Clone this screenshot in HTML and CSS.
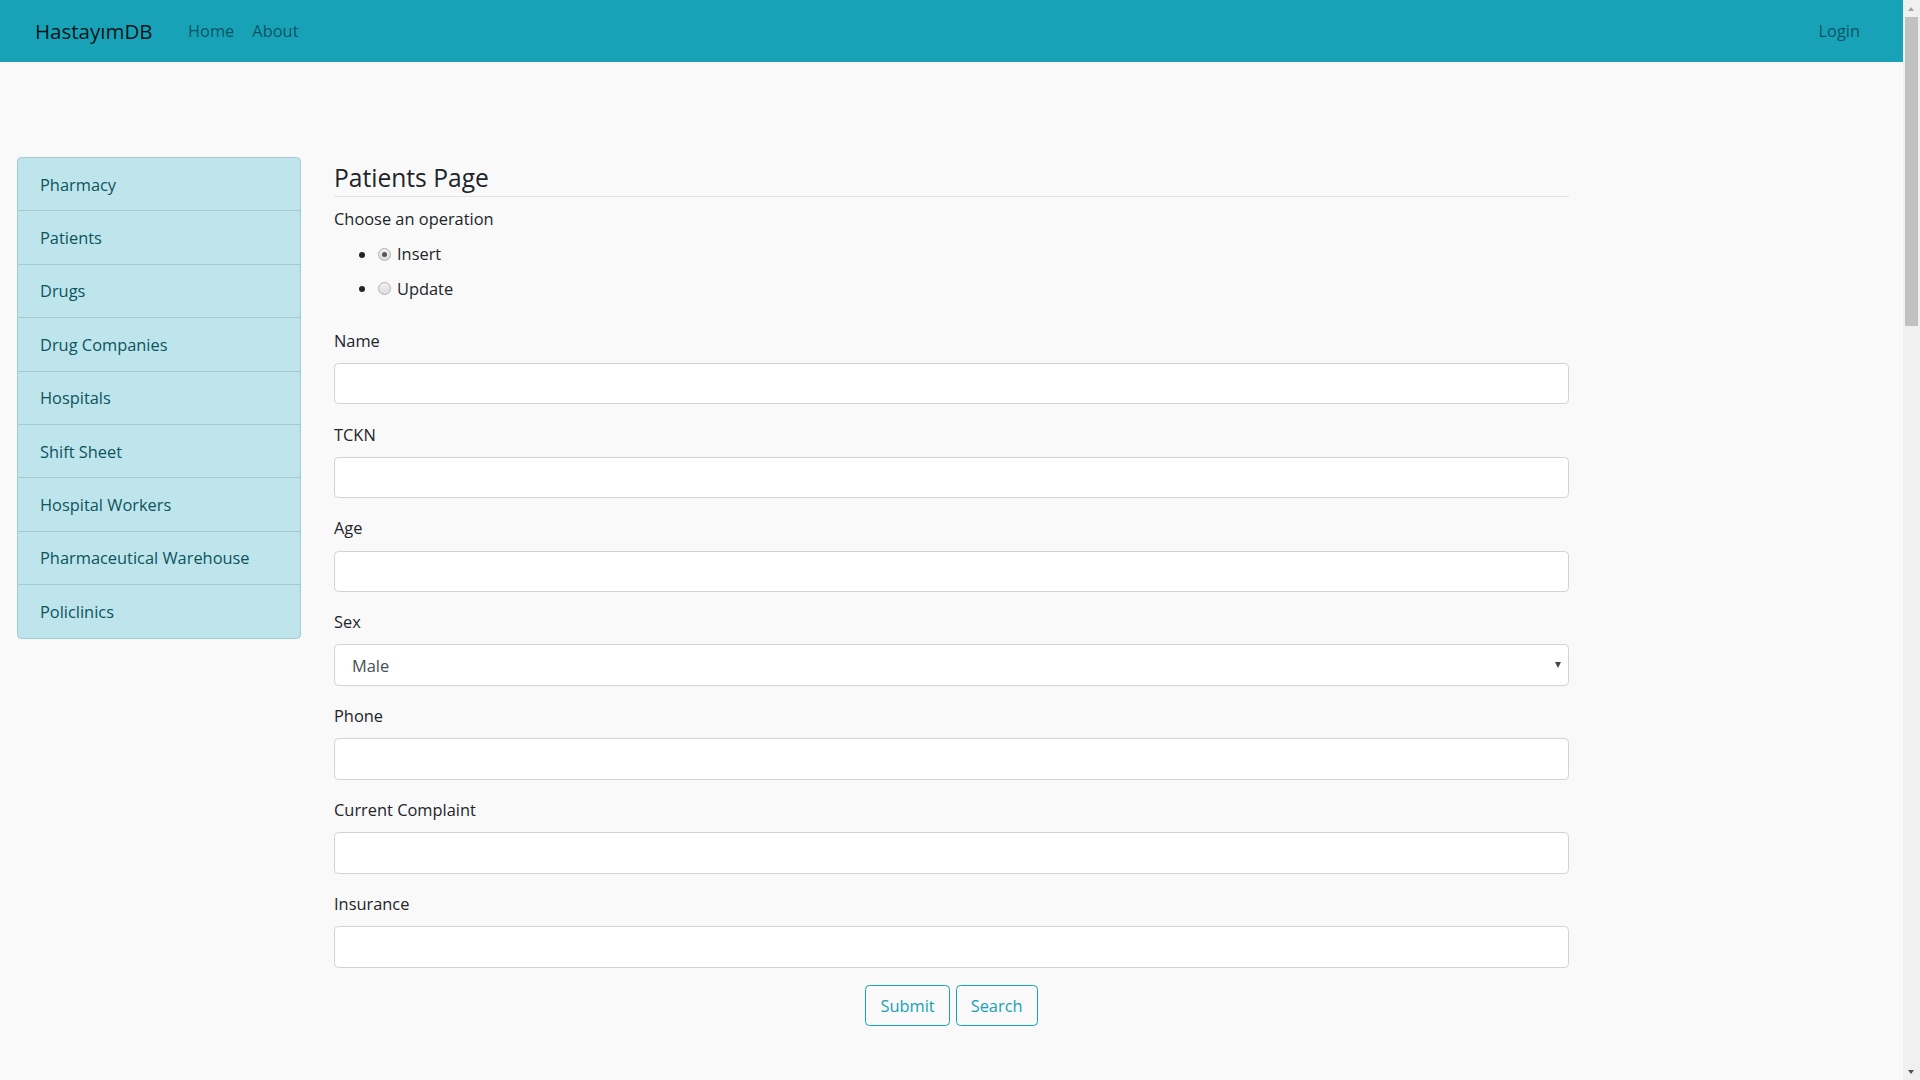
FILE: index.html
```html
<!DOCTYPE html>
<html lang="en">
<head>
<meta charset="utf-8">
<title>HastayımDB - Patients</title>
<link rel="stylesheet" href="styles.css">
</head>
<body>
<nav class="navbar">
  <a class="brand" href="#">HastayımDB</a>
  <ul class="nav">
    <li><a class="nav-link" href="#">Home</a></li>
    <li><a class="nav-link" href="#">About</a></li>
  </ul>
  <a class="nav-link login" href="#">Login</a>
</nav>

<div class="page">
  <aside class="sidebar">
    <ul class="list-group">
      <li class="list-item">Pharmacy</li>
      <li class="list-item">Patients</li>
      <li class="list-item">Drugs</li>
      <li class="list-item">Drug Companies</li>
      <li class="list-item">Hospitals</li>
      <li class="list-item">Shift Sheet</li>
      <li class="list-item">Hospital Workers</li>
      <li class="list-item">Pharmaceutical Warehouse</li>
      <li class="list-item">Policlinics</li>
    </ul>
  </aside>

  <main class="content">
    <h4 class="title">Patients Page</h4>
    <form class="form">
      <label class="label">Choose an operation</label>
      <ul class="ops">
        <li><label class="label radio-label"><input class="radio" type="radio" name="op" checked> Insert</label></li>
        <li><label class="label radio-label"><input class="radio" type="radio" name="op"> Update</label></li>
      </ul>

      <div class="group"><label class="label">Name</label><input class="control" type="text"></div>
      <div class="group"><label class="label">TCKN</label><input class="control" type="text"></div>
      <div class="group"><label class="label">Age</label><input class="control" type="text"></div>
      <div class="group"><label class="label">Sex</label>
        <div class="select-wrap">
          <select class="control select"><option>Male</option><option>Female</option></select>
        </div>
      </div>
      <div class="group"><label class="label">Phone</label><input class="control" type="text"></div>
      <div class="group"><label class="label">Current Complaint</label><input class="control" type="text"></div>
      <div class="group"><label class="label">Insurance</label><input class="control" type="text"></div>

      <div class="actions">
        <button class="btn" type="button">Submit</button>
        <button class="btn" type="button">Search</button>
      </div>
    </form>
  </main>
</div>

<div class="scrollbar">
  <div class="sb-up"></div>
  <div class="sb-thumb"></div>
  <div class="sb-down"></div>
</div>
</body>
</html>
```

FILE: styles.css
```css
* { box-sizing: border-box; }

html, body { margin: 0; padding: 0; }

body {
  background: #f9f9f9;
  color: #212529;
  font-family: "Open Sans", "Noto Sans", "Liberation Sans", sans-serif;
  font-size: 16.4px;
  padding-right: 17px;
  min-height: 1080px;
}

/* Navbar */
.navbar {
  height: 62px;
  background: #17a2b8;
  display: flex;
  align-items: center;
  padding: 0 43px 0 35px;
}
.brand {
  width: 153px;
  font-size: 20.5px;
  color: rgba(0, 0, 0, 0.9);
  text-decoration: none;
  line-height: 33px;
}
.nav {
  list-style: none;
  display: flex;
  gap: 18px;
  margin: 0;
  padding: 0;
  flex: 1;
}
.nav-link {
  color: rgba(0, 0, 0, 0.5);
  text-decoration: none;
  font-size: 16.4px;
  line-height: 26px;
}

/* Layout */
.page {
  display: flex;
  align-items: flex-start;
  gap: 33px;
  padding: 95px 0 0 17px;
}

/* Sidebar */
.sidebar { width: 284px; flex: none; }
.list-group {
  list-style: none;
  margin: 0;
  padding: 0;
  border: 1px solid #a4c9cf;
  border-radius: 4.4px;
  overflow: hidden;
  background: #bee5eb;
}
.list-item {
  padding: 13.5px 22px 12.5px;
  line-height: 26.4px;
  color: #0c5460;
  border-top: 1px solid #a4c9cf;
}
.list-item:first-child { border-top: 0; }

/* Content */
.content { width: 1235px; flex: none; }
.title {
  margin: 0 0 9px;
  font-weight: 400;
  font-size: 24.6px;
  line-height: 32px;
  padding: 5px 0 2px;
  border-bottom: 1px solid #e1e3e5;
  color: #212529;
}
.form { margin: 0; }
.label {
  display: inline-block;
  line-height: 26.4px;
  margin-bottom: 8.8px;
}
.ops {
  margin: 0 0 17.6px;
  padding-left: 44px;
}
.ops li { line-height: 26.4px; }
.radio-label { display: inline-flex; align-items: center; gap: 6px; margin-bottom: 8px; }
.radio {
  appearance: none;
  -webkit-appearance: none;
  width: 13px;
  height: 13px;
  margin: 0;
  border: 1px solid #b0b0b0;
  border-radius: 50%;
  background: linear-gradient(#f1f1f1, #dcdcdc);
  position: relative;
}
.radio:checked::after {
  content: "";
  position: absolute;
  left: 3px;
  top: 3px;
  width: 5px;
  height: 5px;
  border-radius: 50%;
  background: #555;
}

.group { margin-bottom: 17.1px; }
.group .label { display: block; }
.control {
  display: block;
  width: 100%;
  height: 41.6px;
  padding: 6.6px 13.2px;
  font: inherit;
  color: #495057;
  background: #fff;
  border: 1px solid #ced4da;
  border-radius: 4.4px;
  outline: none;
}
.select-wrap { position: relative; }
.select {
  appearance: none;
  -webkit-appearance: none;
  padding-left: 17px;
}
.select-wrap::after {
  content: "";
  position: absolute;
  right: 8px;
  top: 18px;
  border-left: 3.5px solid transparent;
  border-right: 3.5px solid transparent;
  border-top: 6px solid #444;
  pointer-events: none;
}

.actions {
  display: flex;
  justify-content: center;
  gap: 6px;
}
.btn {
  height: 41px;
  padding: 0 14px;
  font: inherit;
  font-size: 16.4px;
  color: #1a9fb4;
  background: transparent;
  border: 1px solid #17a2b8;
  border-radius: 4.4px;
}

/* Fake scrollbar */
.scrollbar {
  position: fixed;
  top: 0;
  right: 0;
  width: 17px;
  height: 100%;
  background: #f0f0f0;
}
.sb-up, .sb-down {
  position: absolute;
  left: 5px;
  width: 0;
  height: 0;
  border-left: 3.5px solid transparent;
  border-right: 3.5px solid transparent;
}
.sb-up { top: 7px; border-bottom: 4px solid #a3a3a3; }
.sb-down { bottom: 6px; border-top: 4px solid #505050; }
.sb-thumb {
  position: absolute;
  left: 2px;
  top: 17px;
  width: 13px;
  height: 309px;
  background: #c1c1c1;
}
```
